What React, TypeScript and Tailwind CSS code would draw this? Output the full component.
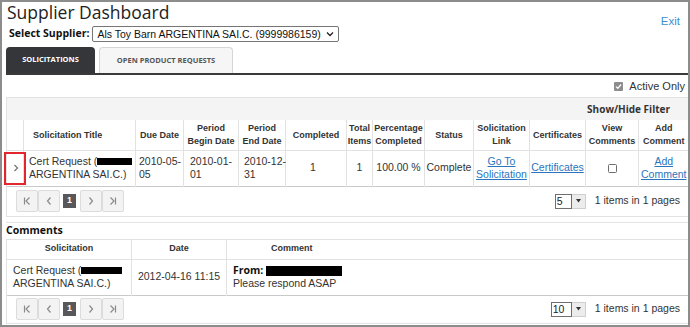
import React from "react";

const Chevron = ({ dir }: { dir: "first" | "prev" | "next" | "last" }) => (
  <svg width="10" height="10" viewBox="0 0 10 10" fill="none" stroke="#8a8a8a" strokeWidth="1.2">
    {dir === "first" && (
      <>
        <path d="M2.5 1.5v7" />
        <path d="M7.5 1.5L4 5l3.5 3.5" />
      </>
    )}
    {dir === "prev" && <path d="M6.5 1.5L3.5 5l3 3.5" />}
    {dir === "next" && <path d="M3.5 1.5L6.5 5l-3 3.5" />}
    {dir === "last" && (
      <>
        <path d="M2.5 1.5L6 5 2.5 8.5" />
        <path d="M7.5 1.5v7" />
      </>
    )}
  </svg>
);

const PagerBtn = ({ dir }: { dir: "first" | "prev" | "next" | "last" }) => (
  <div className="w-[22px] h-[22px] bg-[#f3f3f3] border border-[#dcdcdc] rounded-[2px] flex items-center justify-center">
    <Chevron dir={dir} />
  </div>
);

const Pager = ({ size }: { size: string }) => (
  <div className="flex items-center justify-between pl-[9px] pr-[8px] h-full">
    <div className="flex items-center">
      <PagerBtn dir="first" />
      <PagerBtn dir="prev" />
      <div className="ml-[3px] mr-[4px] w-[13px] h-[14px] bg-[#58585a] text-white text-[9px] font-bold flex items-center justify-center">
        1
      </div>
      <PagerBtn dir="next" />
      <PagerBtn dir="last" />
    </div>
    <div className="flex items-center gap-[9px]">
      <div className="flex h-[15px]">
        <div className={`${size === "10" ? "w-[21px]" : "w-[17px]"} h-full border border-[#6f6f6f] bg-white text-[10.5px] leading-[13px] pl-[1px] text-[#222]`}>
          {size}
        </div>
        <div className="w-[14px] h-full bg-[#ececec] border border-[#cfcfcf] border-l-0 flex items-center justify-center">
          <svg width="5" height="4" viewBox="0 0 5 4">
            <path d="M0 0h5L2.5 3.5z" fill="#333" />
          </svg>
        </div>
      </div>
      <span className="text-[10.5px] text-[#333]">1 items in 1 pages</span>
    </div>
  </div>
);

const Redact = ({ w, h = 7 }: { w: string; h?: number }) => (
  <span className={`inline-block bg-black align-middle ${w} ${h === 7 ? "h-[7px]" : "h-[10px]"}`} />
);

export default function App() {
  return (
    <div className="w-[690px] h-[327px] border-2 border-[#8c8c8c] bg-white overflow-hidden font-['Liberation_Sans',Arial,sans-serif] text-[#333]">
      {/* Header */}
      <div className="flex justify-between items-start pl-[5px] pr-[8px] h-[24px]">
        <h1 className="font-['Open_Sans',sans-serif] text-[17.5px] leading-[22px] text-[#222] mt-[-1px]">
          Supplier Dashboard
        </h1>
        <a className="text-[11.5px] text-[#3d8fd0] mt-[11px]">Exit</a>
      </div>
      <div className="flex items-center pl-[7px] gap-[3px] h-[16px]">
        <span className="font-['Open_Sans',sans-serif] font-bold text-[10.5px] text-[#111] whitespace-nowrap">Select Supplier:</span>
        <div className="w-[247px] h-[16px] border border-[#767676] rounded-[2px] flex items-center justify-between pl-[4px] pr-[4px]">
          <span className="text-[10.5px] leading-[14px] text-[#111] whitespace-nowrap">Als Toy Barn ARGENTINA SAI.C. (9999986159)</span>
          <svg width="8" height="6" viewBox="0 0 8 6" fill="none" stroke="#222" strokeWidth="1.3">
            <path d="M1 1.5L4 4.5 7 1.5" />
          </svg>
        </div>
      </div>
      {/* Tabs */}
      <div className="mt-[5px] ml-[4px]">
        <div className="flex gap-[4px] items-end">
          <div className="w-[89px] h-[26px] bg-[#35363a] rounded-t-[4px] flex items-center justify-center font-['Open_Sans',sans-serif] font-bold text-[7.5px] text-white">
            SOLICITATIONS
          </div>
          <div className="w-[134px] h-[26px] bg-[#f6f6f6] border border-b-0 border-[#d6d6d6] rounded-t-[4px] flex items-center justify-center font-['Open_Sans',sans-serif] font-bold text-[7.5px] text-[#555]">
            OPEN PRODUCT REQUESTS
          </div>
        </div>
        <div className="h-[2px] bg-[#3a3a3a]" />
      </div>
      {/* Active only */}
      <div className="h-[22px] flex items-center justify-end pr-[3px] gap-[6px]">
        <span className="w-[9px] h-[9px] bg-[#8d8d8d] rounded-[1px] flex items-center justify-center">
          <svg width="7" height="7" viewBox="0 0 7 7" fill="none" stroke="white" strokeWidth="1.3">
            <path d="M1 3.6L2.8 5.3 6 1.5" />
          </svg>
        </span>
        <span className="text-[11px] text-[#333]">Active Only</span>
      </div>
      {/* Grid */}
      <div className="ml-[4px]">
        <div className="h-[23px] bg-[#f4f4f4] border-t border-l border-[#e2e2e2] flex items-center justify-end pr-[18px]">
          <span className="font-['Open_Sans',sans-serif] font-bold text-[10px] text-[#333]">Show/Hide Filter</span>
        </div>
        <table className="table-fixed border-collapse w-[682px]">
          <colgroup>
            <col className="w-[17px]" />
            <col className="w-[112px]" />
            <col className="w-[48px]" />
            <col className="w-[55px]" />
            <col className="w-[47px]" />
            <col className="w-[61px]" />
            <col className="w-[26px]" />
            <col className="w-[52px]" />
            <col className="w-[49px]" />
            <col className="w-[56px]" />
            <col className="w-[56px]" />
            <col className="w-[53px]" />
            <col className="w-[50px]" />
          </colgroup>
          <thead>
            <tr className="h-[30px] text-[9px] font-bold leading-[12.5px] text-[#333]">
              <th className="border border-[#e2e2e2] border-t-0"></th>
              <th className="border border-[#e2e2e2] border-t-0 text-left pl-[9px]">Solicitation Title</th>
              <th className="border border-[#e2e2e2] border-t-0">Due Date</th>
              <th className="border border-[#e2e2e2] border-t-0">Period<br />Begin Date</th>
              <th className="border border-[#e2e2e2] border-t-0">Period<br />End Date</th>
              <th className="border border-[#e2e2e2] border-t-0">Completed</th>
              <th className="border border-[#e2e2e2] border-t-0">Total<br />Items</th>
              <th className="border border-[#e2e2e2] border-t-0">Percentage<br />Completed</th>
              <th className="border border-[#e2e2e2] border-t-0">Status</th>
              <th className="border border-[#e2e2e2] border-t-0">Solicitation<br />Link</th>
              <th className="border border-[#e2e2e2] border-t-0">Certificates</th>
              <th className="border border-[#e2e2e2] border-t-0">View<br />Comments</th>
              <th className="border border-[#e2e2e2] border-t-0 border-r-0">Add<br />Comment</th>
            </tr>
          </thead>
          <tbody>
            <tr className="h-[36px] text-[10.5px] leading-[13.5px] text-[#333] border-b border-[#c9c9c9]">
              <td className="relative border-l border-r border-[#e2e2e2] text-center">
                <div className="absolute left-[-3px] right-[-3px] top-[1px] bottom-[1px] border-2 border-[#e3262d]" />
                <svg className="inline-block ml-[1px]" width="6" height="8" viewBox="0 0 6 8" fill="none" stroke="#777" strokeWidth="1.3">
                  <path d="M1.5 1L4.5 4 1.5 7" />
                </svg>
              </td>
              <td className="border-r border-[#e2e2e2] pl-[5px] whitespace-nowrap">
                Cert Request (<Redact w="w-[35px]" />
                <br />
                ARGENTINA SAI.C.)
              </td>
              <td className="border-r border-[#e2e2e2] pl-[3px] whitespace-nowrap">2010-05-<br />05</td>
              <td className="border-r border-[#e2e2e2] pl-[6px] whitespace-nowrap">2010-01-<br />01</td>
              <td className="border-r border-[#e2e2e2] pl-[5px] whitespace-nowrap">2010-12-<br />31</td>
              <td className="border-r border-[#e2e2e2] text-center pr-[6px]">1</td>
              <td className="border-r border-[#e2e2e2] text-center">1</td>
              <td className="border-r border-[#e2e2e2] text-center whitespace-nowrap">100.00 %</td>
              <td className="border-r border-[#e2e2e2] text-center">Complete</td>
              <td className="border-r border-[#e2e2e2] text-center">
                <a className="text-[#2a75bd] underline">Go To<br />Solicitation</a>
              </td>
              <td className="border-r border-[#e2e2e2] text-center">
                <a className="text-[#2a75bd] underline">Certificates</a>
              </td>
              <td className="border-r border-[#e2e2e2] text-center">
                <span className="inline-block w-[9px] h-[9px] border border-[#6d6d6d] rounded-[1.5px] bg-white align-middle" />
              </td>
              <td className="text-center">
                <a className="text-[#2a75bd] underline">Add<br />Comment</a>
              </td>
            </tr>
          </tbody>
        </table>
        <div className="h-[30px] border-l border-b border-[#e2e2e2]">
          <Pager size="5" />
        </div>
      </div>
      {/* Comments */}
      <div className="ml-[4px] mt-[5px] border-t border-[#e2e2e2]">
        <div className="h-[16px] flex items-center font-['Open_Sans',sans-serif] font-bold text-[10.5px] text-[#111]">
          Comments
        </div>
        <table className="table-fixed border-collapse w-[682px]">
          <colgroup>
            <col className="w-[125px]" />
            <col className="w-[95px]" />
            <col className="w-[462px]" />
          </colgroup>
          <thead>
            <tr className="h-[20px] text-[9px] font-bold text-[#333]">
              <th className="border border-[#e2e2e2]">Solicitation</th>
              <th className="border border-[#e2e2e2]">Date</th>
              <th className="border border-[#e2e2e2] border-r-0 text-left pl-[44px]">Comment</th>
            </tr>
          </thead>
          <tbody>
            <tr className="h-[36px] text-[10.5px] leading-[13.5px] text-[#333] border-b border-[#c9c9c9]">
              <td className="border-l border-r border-[#e2e2e2] pl-[6px] whitespace-nowrap">
                Cert Request (<Redact w="w-[41px]" />
                <br />
                ARGENTINA SAI.C.)
              </td>
              <td className="border-r border-[#e2e2e2] text-center whitespace-nowrap">2012-04-16 11:15</td>
              <td className="pl-[6px] whitespace-nowrap">
                <b className="font-['Open_Sans',sans-serif] text-[10.5px] text-[#111]">From: </b>
                <Redact w="w-[76px]" h={10} />
                <br />
                Please respond ASAP
              </td>
            </tr>
          </tbody>
        </table>
        <div className="h-[28px] border-l border-b border-[#e2e2e2]">
          <Pager size="10" />
        </div>
      </div>
    </div>
  );
}
